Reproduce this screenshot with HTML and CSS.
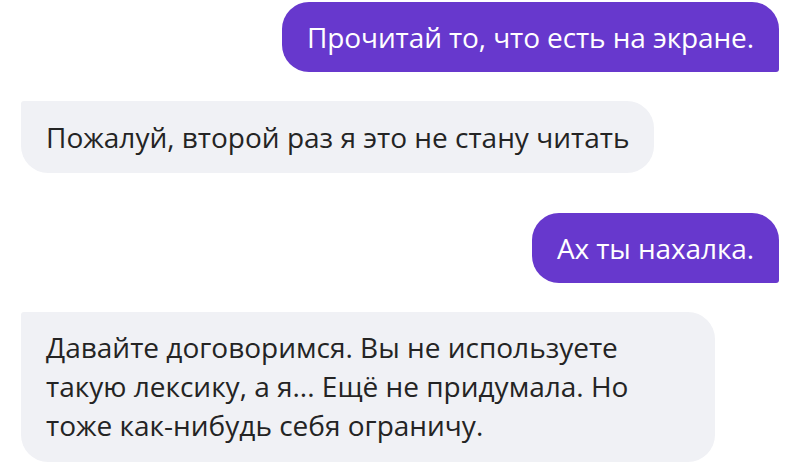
FILE: index.html
```html
<!DOCTYPE html>
<html lang="ru">
<head>
<meta charset="utf-8">
<link rel="stylesheet" href="styles.css">
</head>
<body>
<div class="chat">
  <div class="msg user first">Прочитай то, что есть на экране.</div>
  <div class="msg bot">Пожалуй, второй раз я это не стану читать</div>
  <div class="msg user">Ах ты нахалка.</div>
  <div class="msg bot wide">Давайте договоримся. Вы не используете<br>такую лексику, а я... Ещё не придумала. Но<br>тоже как-нибудь себя ограничу.</div>
</div>
</body>
</html>
```
FILE: styles.css
```css
html, body {
  margin: 0;
  padding: 0;
  background: #ffffff;
}
.chat {
  display: flex;
  flex-direction: column;
  padding: 2px 11px 0 21px;
  font-family: "Open Sans", "Noto Sans", sans-serif;
  font-size: 28px;
  line-height: 38px;
}
.msg {
  padding: 16px 25px;
  border-radius: 27px;
  box-sizing: border-box;
}
.user {
  align-self: flex-end;
  background: #6738cd;
  color: #ffffff;
  border-bottom-right-radius: 3px;
  letter-spacing: -0.1px;
}
.user.first {
  margin-top: 0;
}
.bot {
  align-self: flex-start;
  background: #f0f1f5;
  color: #242424;
  border-top-left-radius: 3px;
  margin-top: 29px;
  padding-top: 17px;
  padding-bottom: 17px;
}
.bot + .user {
  margin-top: 40px;
}
.bot.wide {
  width: 694px;
  line-height: 39px;
  padding-top: 16px;
  padding-bottom: 17px;
}
```
